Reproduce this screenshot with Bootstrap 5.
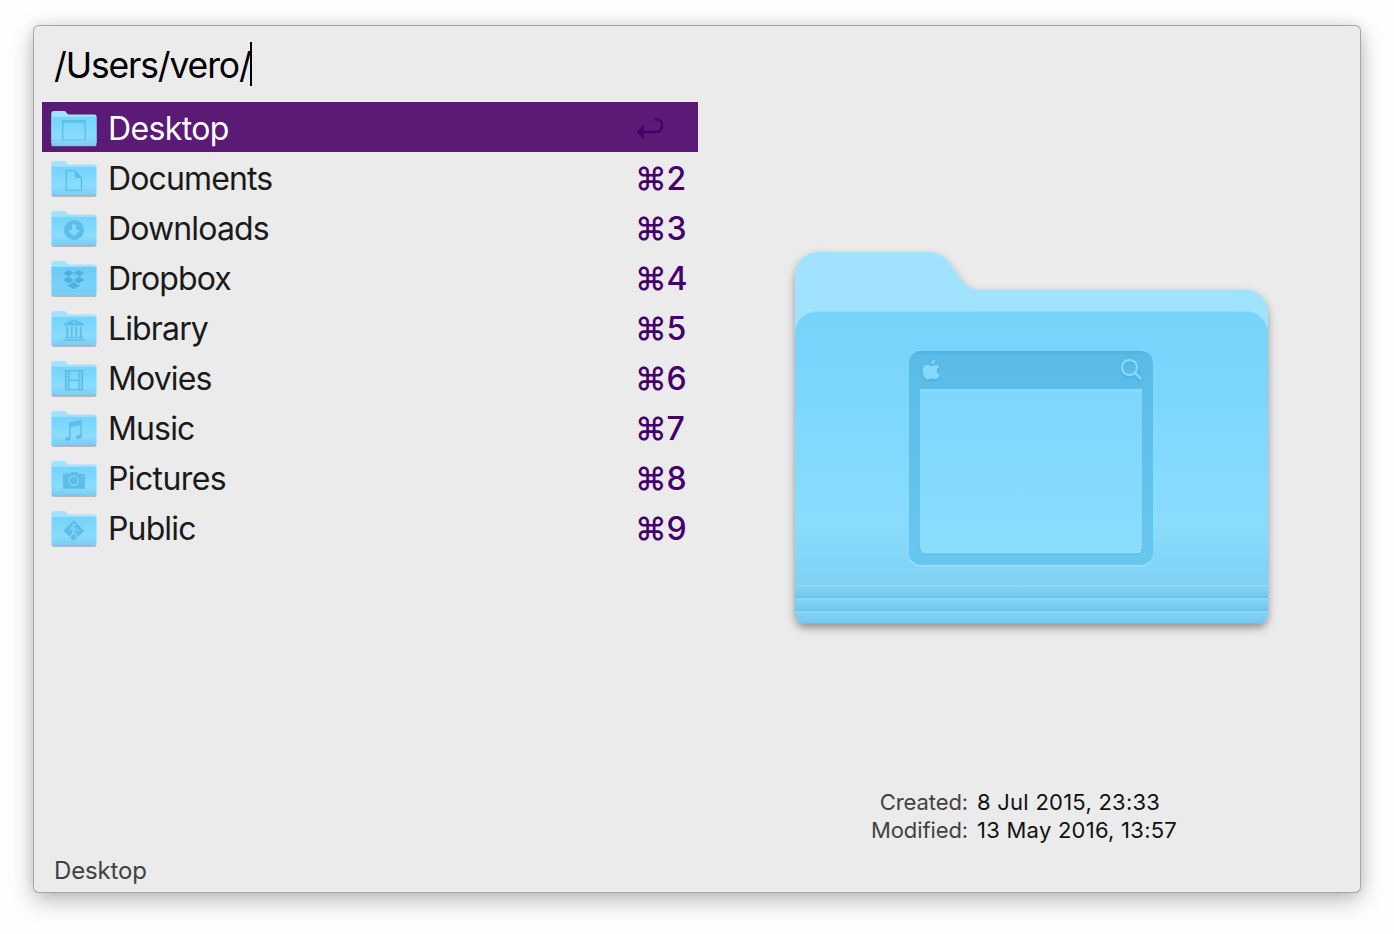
<!DOCTYPE html>
<html lang="en">
<head>
<meta charset="utf-8">
<meta name="viewport" content="width=device-width, initial-scale=1">
<title>File navigation</title>
<link href="https://cdn.jsdelivr.net/npm/bootstrap@5.3.0/dist/css/bootstrap.min.css" rel="stylesheet">
<style>
  body { background: #fefefe; font-family: Inter, "Liberation Sans", sans-serif; font-weight: 425; height: 934px; padding: 26px 34px 42px; overflow: hidden; }
  .launcher { width: 1326px; height: 866px; background: #ebebeb; border-radius: 5px; box-shadow: 0 0 0 1px #a6a6a6, 0 8px 24px rgba(0,0,0,.27), 0 0 14px rgba(0,0,0,.1); }
  .query { height: 76px; padding-left: 20px; font-size: 35.5px; letter-spacing: -1.15px; color: #000; padding-top: 3px; }
  .caret { width: 2px; height: 44px; background: #000; margin-left: -1px; margin-top: -4px; }
  .results { width: 656px; margin-left: 8px; }
  .result { height: 50px; padding: 0 12px 0 7px; font-size: 32px; line-height: 50px; color: #1a1a1a; }
  .result .label { margin-left: 9px; padding-top: 2px; letter-spacing: -.86px; }
  .result .label.roomy { letter-spacing: -.62px; }
  .result.chosen { background: #5a1a75; color: #fff; }
  .keys { width: 51px; padding-top: 2px; color: #45006b; white-space: nowrap; letter-spacing: -.3px; font-weight: 450; }
  .folder-sm { width: 50px; height: 50px; display: block; }
  .status { height: 42px; padding-left: 20px; font-size: 24px; letter-spacing: -.15px; color: #424242; }
  .preview { padding: 206px 0 0 3px; }
  .folder-lg { width: 513px; height: 432px; display: block; }
  .facts { margin: 124px 0 0; width: 659px; font-size: 22px; line-height: 28px; color: #111; }
  .facts dt { width: 267px; text-align: right; font-weight: 425; color: #424242; margin-right: 9px; letter-spacing: -.1px; }
  .facts dd { margin: 0; letter-spacing: .25px; }
  .cut { fill: none; stroke: #56b7e3; stroke-width: 1.1; }
  .solid { fill: #5dbce8; }
</style>
</head>
<body>
<svg width="0" height="0" class="position-absolute" aria-hidden="true">
  <defs>
    <linearGradient id="back" x1="0" y1="0" x2="0" y2="1"><stop offset="0" stop-color="#a0e2ff"/><stop offset="1" stop-color="#a4e5ff"/></linearGradient>
    <linearGradient id="front" x1="0" y1="0" x2="0" y2="1"><stop offset="0" stop-color="#76d3fa"/><stop offset=".3" stop-color="#7dd7fd"/><stop offset=".68" stop-color="#8adcfd"/><stop offset=".87" stop-color="#80d2f4"/><stop offset="1" stop-color="#6fc8ef"/></linearGradient>
    <linearGradient id="fold" x1="0" y1="0" x2="0" y2="1"><stop offset="0" stop-color="#90daf7"/><stop offset=".2" stop-color="#83d3f4"/><stop offset="1" stop-color="#6fc6ed"/></linearGradient>
    <linearGradient id="frame" x1="0" y1="0" x2="0" y2="1"><stop offset="0" stop-color="#50b0dd"/><stop offset=".02" stop-color="#5abbe7"/><stop offset="1" stop-color="#68c7ef"/></linearGradient>
    <linearGradient id="pane" x1="0" y1="0" x2="0" y2="1"><stop offset="0" stop-color="#8cdcfd"/><stop offset=".03" stop-color="#7dd6fc"/><stop offset="1" stop-color="#8bddfd"/></linearGradient>
    <clipPath id="frontclip"><path d="M0 83C0 68 10 59 25 59H448C463 59 473 68 473 83V359Q473 372 460 372H13Q0 372 0 359Z"/></clipPath>
    <g id="folder">
      <path fill="url(#back)" d="M0 27C0 10 9 0 26 0H135C143 0 149 4 155 12L167 29C172 35 176 37.500 184 37.500H449C464 37.500 473 48 473 62V340H0Z"/>
      <g clip-path="url(#frontclip)">
        <rect y="59" width="473" height="313" fill="url(#front)"/>
        <rect y="59" width="473" height="1.300" fill="#8bdcfc"/>
        <rect y="333" width="473" height="13" fill="url(#fold)"/>
        <rect y="346" width="473" height="13" fill="url(#fold)"/>
        <rect y="359" width="473" height="13" fill="url(#fold)"/>
        <path d="M0 345.500H473M0 358.500H473M0 371.500H473" stroke="#68bfe8"/>
      </g>
    </g>
    <symbol id="small" viewBox="0 0 50 50">
      <path d="M3 14H47V43.500Q47 44.900 45.500 44.900H4.500Q3 44.900 3 43.500Z" fill="#777" opacity=".45"/>
      <use href="#folder" transform="translate(2.300 9) scale(.0958 .0938)"/>
    </symbol>
  </defs>
</svg>

<main class="launcher d-flex flex-column">
  <div class="d-flex flex-fill">
    <section class="d-flex flex-column">
      <div class="query d-flex align-items-center"><span>/Users/vero/</span><span class="caret"></span></div>
      <div class="results flex-fill">
        <div class="result chosen d-flex">
          <svg class="folder-sm" viewBox="0 0 50 50"><use href="#small"/><path class="cut" d="M13.800 18.800H36.200V38.200H13.800Z"/><path class="cut" d="M13.800 20H36.200" stroke-width="2"/><path d="M13.500 39.200H36.500" stroke="#a4e5ff" stroke-width=".6"/></svg>
          <span class="label roomy flex-fill">Desktop</span>
          <span class="keys"><svg width="28" height="46" viewBox="-1 2 28 46" class="d-block"><path d="M18.500 17.500C24 16.500 26 19.500 26 23.500C26 28 23 30 18.500 30H6" fill="none" stroke="#45006b" stroke-width="2.300"/><path d="M.5 30L8 23V37Z" fill="#45006b"/></svg></span>
        </div>
        <div class="result d-flex">
          <svg class="folder-sm" viewBox="0 0 50 50"><use href="#small"/><path class="cut" d="M17.200 18.800H26L32.500 26V38.200H17.200Z"/><path class="solid" d="M26 18.500L33 26H26Z"/></svg>
          <span class="label flex-fill">Documents</span><span class="keys">⌘2</span>
        </div>
        <div class="result d-flex">
          <svg class="folder-sm" viewBox="0 0 50 50"><use href="#small"/><circle class="solid" cx="25" cy="28" r="10"/><path fill="#82d8fb" d="M23 22.500H27V28H31L25 34.500L19 28H23Z"/></svg>
          <span class="label flex-fill">Downloads</span><span class="keys">⌘3</span>
        </div>
        <div class="result d-flex">
          <svg class="folder-sm" viewBox="0 0 50 50"><use href="#small"/><rect x="2.500" y="15" width="45" height="25" fill="#5dc1ef" opacity=".4"/><path fill="#50b1de" d="M20 17.700L24.700 21L19 24.500L14.300 21ZM29.500 17.700L35 21L30.400 24.500L24.700 21ZM14.300 28L19 24.500L24.700 28L20 31.500ZM35 28L30.400 24.500L24.700 28L29.500 31.500ZM18.500 32.300L20 33.200L24.700 29.500L29.500 33.200L31 32.300V33.500L24.700 37.300L18.500 33.500Z"/></svg>
          <span class="label flex-fill">Dropbox</span><span class="keys">⌘4</span>
        </div>
        <div class="result d-flex">
          <svg class="folder-sm" viewBox="0 0 50 50"><use href="#small"/><path class="solid" fill-rule="evenodd" d="M25 17.300L35 22V23.300H15V22ZM25 19.200A1.300 1.300 0 1 0 25 21.800A1.300 1.300 0 1 0 25 19.200M17.300 24.500H19.200V35H17.300ZM21.800 24.500H23.700V35H21.800ZM26.300 24.500H28.200V35H26.300ZM30.800 24.500H32.700V35H30.800ZM16 35H34V36.200H16ZM14.300 37.300H35.700V38.700H14.300Z"/></svg>
          <span class="label flex-fill">Library</span><span class="keys">⌘5</span>
        </div>
        <div class="result d-flex">
          <svg class="folder-sm" viewBox="0 0 50 50"><use href="#small"/><path class="cut" d="M16.500 18.700H33.500V37.800H16.500ZM20 18.700V37.800M30 18.700V37.800M20 28.200H30"/><path d="M18.200 19V38M31.800 19V38" stroke="#5dbce8" stroke-width="2.800" stroke-dasharray="1 1.500"/></svg>
          <span class="label flex-fill">Movies</span><span class="keys">⌘6</span>
        </div>
        <div class="result d-flex">
          <svg class="folder-sm" viewBox="0 0 50 50"><use href="#small"/><path class="solid" d="M20.200 20.300L32.800 18V34C32.800 36 31 37.200 29 37.200C26.500 37.200 26 34.500 28 33.500C29.500 32.700 31 33 31.500 32.500V23L21.600 25V36C21.600 37.800 20 38.800 18.500 38.800C15.800 38.800 15.700 36 17.500 35.200C19 34.600 20.200 34.800 20.200 34Z"/></svg>
          <span class="label flex-fill">Music</span><span class="keys">⌘7</span>
        </div>
        <div class="result d-flex">
          <svg class="folder-sm" viewBox="0 0 50 50"><use href="#small"/><path class="solid" d="M14 22H16V21H19V22H20.500L22 20H28L29.500 22H36V36.700H14Z"/><circle cx="24.800" cy="28.700" r="4.700" fill="none" stroke="#8bdcfc" stroke-width="1.100"/><circle cx="33.500" cy="24.200" r=".7" fill="#8bdcfc"/></svg>
          <span class="label roomy flex-fill">Pictures</span><span class="keys">⌘8</span>
        </div>
        <div class="result d-flex">
          <svg class="folder-sm" viewBox="0 0 50 50"><use href="#small"/><path class="solid" d="M24.800 18.300L35.200 28.700L24.800 39.100L14.400 28.700Z"/><circle cx="24.700" cy="23.300" r="1.400" fill="#82d8fb"/><path fill="none" stroke="#82d8fb" stroke-width="1.300" d="M20.500 28.500L22 26L25 25.800L27 28L29.500 28.500M24.800 26L24.200 30.500L27 32.500L27.500 35.500M24 30L22.800 33L20.500 35"/></svg>
          <span class="label flex-fill">Public</span><span class="keys">⌘9</span>
        </div>
      </div>
      <div class="status d-flex align-items-center">Desktop</div>
    </section>
    <section class="preview flex-fill d-flex flex-column">
      <svg class="folder-lg align-self-start" style="margin-left:74px" viewBox="-20 -20 513 432">
        <defs>
          <filter id="drop" x="-10%" y="-10%" width="120%" height="120%"><feDropShadow dx="0" dy="4" stdDeviation="4" flood-color="#000" flood-opacity=".38"/></filter>
          <filter id="soft"><feDropShadow dx="0" dy="1" stdDeviation=".8" flood-color="#2f94c8" flood-opacity=".6"/></filter>
        </defs>
        <use href="#folder" filter="url(#drop)"/>
        <rect x="114" y="100.500" width="244" height="214" rx="12" fill="#9be1fb"/>
        <rect x="114" y="99" width="244" height="214" rx="12" fill="url(#frame)"/>
        <path d="M125 137H347V297Q347 302 342 302H130Q125 302 125 297Z" fill="url(#pane)"/>
        <path d="M125 297Q125 302 130 302H342Q347 302 347 297" fill="none" stroke="#55b5e2"/>
        <g filter="url(#soft)">
          <path fill="#86d8fa" d="M136.300 112.500C136 109.800 137.800 108 140 107.700C140.200 110.200 138.600 112.200 136.300 112.500M136.500 114C138 114 139 112.800 141 112.900C142.500 113 143.700 113.800 144.400 114.800C140.800 117 141.200 121.500 144.700 123C143.800 125.300 142.300 127.200 140.500 127.200C139 127.200 138.300 126.400 136.500 126.400C134.700 126.400 134 127.200 132.600 127.200C129.800 127.200 127.500 122.500 127.500 118.800C127.500 115 129.800 112.900 132.400 112.900C134 112.900 135.300 114 136.500 114"/>
          <path fill="none" stroke="#86d8fa" stroke-width="2.400" stroke-linecap="round" d="M342 115.500A7.500 7.500 0 1 1 327 115.500A7.500 7.500 0 1 1 342 115.500M340.200 121.200L345.500 126.500"/>
        </g>
      </svg>
      <dl class="facts">
        <div class="d-flex"><dt>Created:</dt><dd>8 Jul 2015, 23:33</dd></div>
        <div class="d-flex"><dt>Modified:</dt><dd>13 May 2016, 13:57</dd></div>
      </dl>
    </section>
  </div>
</main>
<script src="https://cdn.jsdelivr.net/npm/bootstrap@5.3.0/dist/js/bootstrap.bundle.min.js"></script>
</body>
</html>
